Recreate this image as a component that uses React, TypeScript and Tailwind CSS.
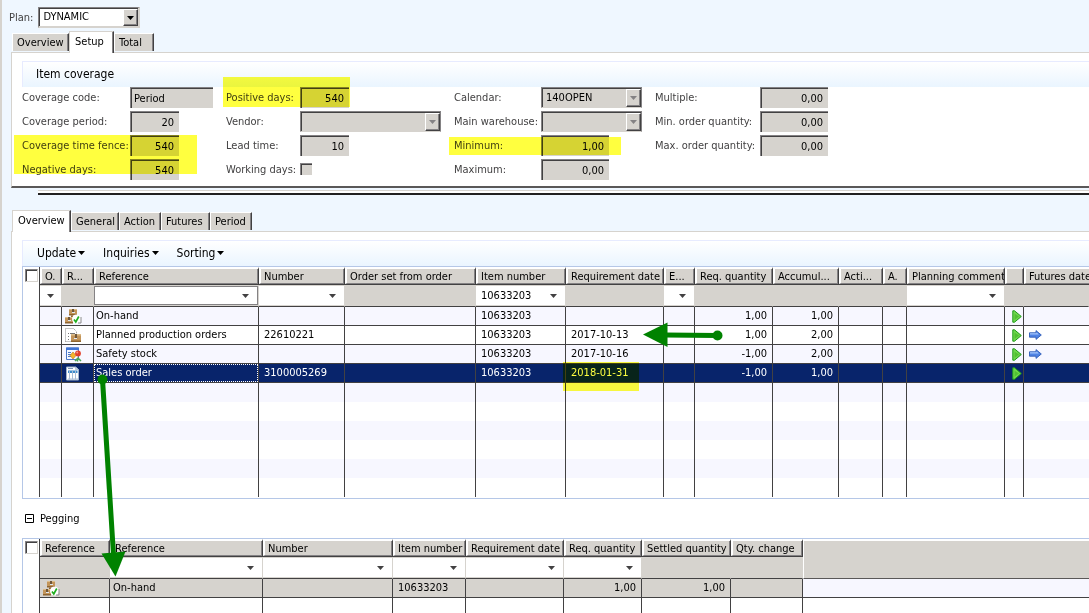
import type { ReactNode } from 'react';
import clsx from 'clsx';

type IconName = 'stock' | 'production' | 'safety' | 'sales';

function RowIcon({ name }: { name: IconName }) {
  if (name === 'stock') {
    return (
      <svg width="17" height="15" viewBox="0 0 17 15" className="block" aria-hidden="true">
        <path d="M4 0h8v6H4zM0 8h8v6H0z" fill="#c3955a" />
        <path d="M4 5h8v1.500H4zM0 13h8v1.500H0z" fill="#8f6530" />
        <path d="M4 0h8v1H4zM0 8h8v1H0z" fill="#dcbc8a" />
        <path d="M7 0h2v3H7zM3 8h2v3H3z" fill="#6f5638" />
        <path d="M7 3h3v1H7zM3 11h3v1H3z" fill="#dfe6f2" />
        <path d="M6 6.500h2V8H6zM8 7h3" fill="#8f6530" />
        <circle cx="11.500" cy="10" r="4.500" fill="#fff" />
        <path d="M16 8v6h-3" fill="none" stroke="#8c8c8c" />
        <path d="M9 10.500l1.800 2.500 3-5.500" fill="none" stroke="#1fae1f" strokeWidth="1.700" />
      </svg>
    );
  }
  if (name === 'production') {
    return (
      <svg width="17" height="15" viewBox="0 0 17 15" className="block" aria-hidden="true">
        <path d="M.5 13.500V.5H8.500l3 3V6" fill="none" stroke="#8d8d8d" strokeDasharray="1 1" />
        <path d="M.5 13.500H6" stroke="#8d8d8d" strokeDasharray="1 1" />
        <path d="M3 5.500h1M5 5.500h5M3 8.500h1M3 11.500h1" stroke="#777" />
        <path d="M6 6h10v8H6z" fill="#c3955a" />
        <path d="M6 6h10v1.500H6z" fill="#dcbc8a" />
        <path d="M6 12.500h10V14H6z" fill="#8f6530" />
        <path d="M10 6h2v4h-2z" fill="#6f5638" />
        <path d="M9 10h3v1H9z" fill="#dfe6f2" />
      </svg>
    );
  }
  if (name === 'safety') {
    return (
      <svg width="17" height="15" viewBox="0 0 17 15" className="block" aria-hidden="true">
        <path d="M1.500 1h12v11.500h-12z" fill="#f4f8ff" stroke="#4b78c8" />
        <path d="M1 .5h13V3H1z" fill="#3f74d6" />
        <path d="M3 5.500h3M3 7.500h3M3 9.500h3" stroke="#4b78c8" />
        <path d="M8 5l3 3.500L8 12 5 8.500z" fill="#f4b72c" stroke="#b9791a" strokeWidth=".6" />
        <path d="M12.500 11v3.500M10 14l3-3 3 3" stroke="#4aa556" strokeWidth="1.500" fill="none" />
        <circle cx="13" cy="6.500" r="2.900" fill="#e2402b" />
        <circle cx="12.200" cy="5.600" r="1" fill="#f79a84" />
      </svg>
    );
  }
  return (
    <svg width="17" height="15" viewBox="0 0 17 15" className="block" aria-hidden="true">
      <path d="M1.500 1h9l3 2.500V14h-12z" fill="#fff" stroke="#9fb2ca" />
      <path d="M10.500 1v2.500h3z" fill="#cfdaea" stroke="#9fb2ca" strokeWidth=".6" />
      <path d="M3 2.500h5" stroke="#7d95b5" />
      <path d="M3 4.500h9.500V7H3z" fill="#3c8ccc" />
      <path d="M4.500 4.500v9M7.500 4.500v9M10.500 4.500v9" stroke="#a9bdd6" />
      <path d="M3 13h10" stroke="#a9bdd6" />
    </svg>
  );
}

function PlayIcon() {
  return (
    <svg width="10" height="13" viewBox="0 0 10 13" className="mt-px block" aria-hidden="true">
      <path d="M.8.800h1.700l6.800 5.700-6.800 5.700H.8z" fill="#6fd84c" stroke="#1f9a1c" strokeLinejoin="round" />
      <path d="M2.500 3.500v6.500l4.500-3.400z" fill="#52bf34" />
    </svg>
  );
}

function ArrowIcon() {
  return (
    <svg width="13" height="10" viewBox="0 0 13 10" className="block" aria-hidden="true">
      <path d="M.5 2.800h6.500V.6L12.300 5 7 9.400V7.200H.5z" fill="#4f83e4" stroke="#2f5cb8" strokeWidth=".9" />
      <path d="M1 3.300h6.500V2.200l2.300 2.300H1z" fill="#a3c4fa" />
    </svg>
  );
}

function Caret({ className }: { className?: string }) {
  return (
    <svg width="7" height="4" viewBox="0 0 7 4" className={clsx('block shrink-0', className)} aria-hidden="true">
      <path d="M0 0h7L3.500 4z" fill="currentColor" />
    </svg>
  );
}

const inset = 'border-t border-l border-[#848284] shadow-[inset_1px_1px_0_#424142]';
const sunken = `${inset} bg-[#d6d3ce]`;

function TextField({ id, value, className }: { id: string; value: string; className: string }) {
  return <input id={id} readOnly value={value} className={clsx('h-[21px] pr-[5px] pl-[3px] outline-none', sunken, className)} />;
}

function DropField({ id, value, className, active }: { id: string; value: string; className: string; active?: boolean }) {
  return (
    <div
      className={clsx(
        'relative h-[21px] border',
        inset,
        active ? 'border-r-2 border-b-2 border-r-[#d6d3ce] border-b-[#d6d3ce] bg-white' : 'border-r-[#848284] border-b-[#d6d3ce] bg-[#d6d3ce]',
        className,
      )}
    >
      <select id={id} defaultValue={value} className="block h-full w-full appearance-none bg-transparent pl-1 text-black outline-none">
        <option>{value}</option>
      </select>
      <span
        className={clsx(
          'pointer-events-none absolute top-px right-0 bottom-0 flex w-[15px] items-center justify-center border-t border-r border-b border-l border-t-white border-r-[#424142] border-b-[#424142] border-l-white bg-[#d6d3ce] shadow-[inset_-1px_-1px_0_#848284]',
          active ? 'text-black' : 'text-[#848284]',
        )}
      >
        <Caret />
      </span>
    </div>
  );
}

function Field({ id, label, children }: { id: string; label: string; children: ReactNode }) {
  return (
    <>
      <label htmlFor={id} className="h-6 text-[#424142] leading-[22px]">
        {label}
      </label>
      <div className="h-6">{children}</div>
    </>
  );
}

function Tabs({ items, active, label }: { items: { name: string; width: string }[]; active: string; label: string }) {
  return (
    <div role="tablist" aria-label={label} className="ml-3 flex h-[21px] items-end">
      {items.map(({ name, width }) => (
        <button
          key={name}
          role="tab"
          aria-selected={name === active}
          className={clsx(
            'border-t border-l border-r border-r-[#424142] pl-1 text-left text-black shadow-[inset_-1px_0_0_#848284]',
            width,
            name === active
              ? 'relative -mb-px h-[22px] border-t-[#d6d3ce] border-l-[#d6d3ce] bg-white pb-px pl-[5px]'
              : 'mb-px h-[18px] border-t-white border-l-white bg-[#d6d3ce] pt-px',
          )}
        >
          {name}
        </button>
      ))}
    </div>
  );
}

function SelectAll({ label }: { label: string }) {
  return (
    <th className="border-r border-r-[#424142] p-0 align-top font-normal">
      <input type="checkbox" aria-label={label} className={clsx('mt-[2px] ml-[2px] block size-[13px] appearance-none border border-r-[#d6d3ce] border-b-[#d6d3ce] bg-white', inset)} />
    </th>
  );
}

function HeadCell({ children, last }: { children?: ReactNode; last?: boolean }) {
  return (
    <th
      className={clsx(
        'h-[18px] overflow-hidden border-t-2 border-b border-t-white border-b-[#424142] bg-[#d6d3ce] p-0 text-left font-normal whitespace-nowrap',
        !last && 'border-r border-r-[#424142]',
      )}
    >
      <div className={clsx('h-[15px] border-b border-l-2 border-b-[#848284] border-l-white pl-[3px] leading-4', !last && 'border-r border-r-[#848284]')}>
        {children}
      </div>
    </th>
  );
}

type Filter = 'none' | 'open' | 'boxed';

function FilterCell({ kind, value, label, narrow }: { kind: Filter; value?: string; label: string; narrow?: boolean }) {
  return (
    <td className="h-[22px] border-r border-b border-r-[#d6d3ce] border-b-[#424142] bg-[#d6d3ce] p-0">
      {kind !== 'none' && (
        <div className={clsx('flex h-[19px] items-center bg-white', kind === 'boxed' && 'border border-[#848284]')}>
          {!narrow && (
            <input aria-label={`Filter ${label}`} defaultValue={value} className="w-full min-w-0 flex-1 bg-transparent pl-[5px] outline-none" />
          )}
          <button aria-label={`Open ${label} filter`} className={clsx('text-[#424142]', narrow ? 'mx-auto' : 'pr-2')}>
            <Caret />
          </button>
        </div>
      )}
    </td>
  );
}

interface Column {
  name: string;
  width?: string;
  filter: Filter;
  filterValue?: string;
  narrow?: boolean;
}

const demandColumns: Column[] = [
  { name: 'O.', width: 'w-[22px]', filter: 'open', narrow: true },
  { name: 'R...', width: 'w-8', filter: 'none' },
  { name: 'Reference', width: 'w-[165px]', filter: 'boxed' },
  { name: 'Number', width: 'w-[86px]', filter: 'open' },
  { name: 'Order set from order', width: 'w-[131px]', filter: 'none' },
  { name: 'Item number', width: 'w-[90px]', filter: 'open', filterValue: '10633203' },
  { name: 'Requirement date', width: 'w-[98px]', filter: 'none' },
  { name: 'E...', width: 'w-[31px]', filter: 'open' },
  { name: 'Req. quantity', width: 'w-[78px]', filter: 'none' },
  { name: 'Accumul...', width: 'w-[66px]', filter: 'none' },
  { name: 'Acti...', width: 'w-11', filter: 'none' },
  { name: 'A.', width: 'w-6', filter: 'none' },
  { name: 'Planning comment', width: 'w-[98px]', filter: 'open' },
  { name: '', width: 'w-[19px]', filter: 'none' },
  { name: 'Futures date', filter: 'none' },
];

interface Demand {
  icon: IconName;
  reference: string;
  number?: string;
  date?: string;
  quantity: string;
  accumulated: string;
  future?: boolean;
  selected?: boolean;
}

const demands: Demand[] = [
  { icon: 'stock', reference: 'On-hand', quantity: '1,00', accumulated: '1,00' },
  { icon: 'production', reference: 'Planned production orders', number: '22610221', date: '2017-10-13', quantity: '1,00', accumulated: '2,00', future: true },
  { icon: 'safety', reference: 'Safety stock', date: '2017-10-16', quantity: '-1,00', accumulated: '2,00', future: true },
  { icon: 'sales', reference: 'Sales order', number: '3100005269', date: '2018-01-31', quantity: '-1,00', accumulated: '1,00', selected: true },
];

function Cell({ children, className, blank, last }: { children?: ReactNode; className?: string; blank?: boolean; last?: boolean }) {
  return (
    <td
      className={clsx(
        'h-[19px] overflow-hidden border-[#424142] py-0 leading-[18px] whitespace-nowrap',
        !blank && 'border-b',
        !last && 'border-r',
        className ?? 'px-[5px]',
      )}
    >
      {children}
    </td>
  );
}

function DemandTable() {
  return (
    <table className="w-full table-fixed border-separate border-spacing-0">
      <colgroup>
        <col className="w-[17px]" />
        {demandColumns.map((c) => (
          <col key={c.name} className={c.width} />
        ))}
      </colgroup>
      <thead>
        <tr>
          <SelectAll label="Select all requirements" />
          {demandColumns.map((c, i) => (
            <HeadCell key={c.name} last={i === demandColumns.length - 1}>
              {c.name}
            </HeadCell>
          ))}
        </tr>
      </thead>
      <tbody>
        <tr>
          <td className="border-r border-[#424142] p-0" />
          {demandColumns.map((c) => (
            <FilterCell key={c.name} kind={c.filter} value={c.filterValue} label={c.name} narrow={c.narrow} />
          ))}
        </tr>
        {demands.map((d, i) => (
          <tr key={d.reference} className={d.selected ? 'bg-[#08246b] text-white' : i % 2 ? 'bg-white' : 'bg-[#f7f7ff]'}>
            <td className="border-r border-[#424142] bg-white p-0" />
            <Cell />
            <Cell className="pl-[3px]">
              <RowIcon name={d.icon} />
            </Cell>
            <Cell className="p-0">
              <div className={clsx('h-[18px] border pl-px leading-4', d.selected ? 'border-dotted border-white' : 'border-transparent')}>{d.reference}</div>
            </Cell>
            <Cell>{d.number}</Cell>
            <Cell />
            <Cell>10633203</Cell>
            <Cell>{d.date}</Cell>
            <Cell />
            <Cell className="px-[5px] text-right">{d.quantity}</Cell>
            <Cell className="px-[5px] text-right">{d.accumulated}</Cell>
            <Cell />
            <Cell />
            <Cell />
            <Cell className="pl-[7px]">
              <PlayIcon />
            </Cell>
            <Cell last>{d.future && <ArrowIcon />}</Cell>
          </tr>
        ))}
        {[0, 1, 2, 3, 4, 5].map((n) => (
          <tr key={n} className={n % 2 ? 'bg-white' : 'bg-[#f7f7ff]'}>
            <td className="border-r border-[#424142] bg-white p-0" />
            {demandColumns.map((c, i) => (
              <Cell key={c.name} blank last={i === demandColumns.length - 1} />
            ))}
          </tr>
        ))}
      </tbody>
    </table>
  );
}

const peggingColumns: Column[] = [
  { name: 'Reference', width: 'w-[70px]', filter: 'none' },
  { name: 'Reference', width: 'w-[153px]', filter: 'open' },
  { name: 'Number', width: 'w-[130px]', filter: 'open' },
  { name: 'Item number', width: 'w-[73px]', filter: 'open' },
  { name: 'Requirement date', width: 'w-[98px]', filter: 'open' },
  { name: 'Req. quantity', width: 'w-[78px]', filter: 'open' },
  { name: 'Settled quantity', width: 'w-[89px]', filter: 'none' },
  { name: 'Qty. change', width: 'w-[72px]', filter: 'none' },
];

function PeggingTable() {
  return (
    <table className="w-full table-fixed border-separate border-spacing-0">
      <colgroup>
        <col className="w-[17px]" />
        {peggingColumns.map((c, i) => (
          <col key={i} className={c.width} />
        ))}
        <col />
      </colgroup>
      <thead>
        <tr>
          <SelectAll label="Select all pegging lines" />
          {peggingColumns.map((c, i) => (
            <HeadCell key={i}>{c.name}</HeadCell>
          ))}
          <th rowSpan={2} className="border-t-2 border-b border-l border-t-white border-b-[#5a5858] border-l-white bg-[#d6d3ce] p-0" />
        </tr>
        <tr>
          <td className="border-r border-[#424142] p-0" />
          {peggingColumns.map((c, i) => (
            <FilterCell key={i} kind={c.filter} label={c.name} />
          ))}
        </tr>
      </thead>
      <tbody>
        <tr className="bg-[#d6d3ce]">
          <td className="border-r border-[#424142] bg-white p-0" />
          <Cell className="pl-[3px]">
            <RowIcon name="stock" />
          </Cell>
          <Cell className="pl-[3px]">On-hand</Cell>
          <Cell />
          <Cell>10633203</Cell>
          <Cell />
          <Cell className="px-[5px] text-right">1,00</Cell>
          <Cell className="px-[5px] text-right">1,00</Cell>
          <Cell />
          <td className="border-b border-[#424142] bg-[#f7f7ff]" />
        </tr>
        <tr>
          <td className="border-r border-[#424142]" />
          {peggingColumns.map((_, i) => (
            <Cell key={i} blank />
          ))}
          <td />
        </tr>
      </tbody>
    </table>
  );
}

const highlight = 'pointer-events-none absolute bg-[#ffff3f] mix-blend-multiply';
const ribbon = 'border-t border-[#e7ebff] bg-linear-to-b from-white to-[#eaf5ff]';

export default function App() {
  return (
    <div className="relative h-screen overflow-hidden border-l-2 border-[#d6d3ce] bg-[#eff7ff] font-['DejaVu_Sans_Condensed','DejaVu_Sans',sans-serif] text-[11px] leading-4 text-black">
      <div className="flex items-center gap-[5px] pt-[7px] pl-[7px]">
        <label htmlFor="plan" className="text-[#424142]">
          Plan:
        </label>
        <DropField id="plan" value="DYNAMIC" className="w-[102px]" active />
      </div>

      <div className="-ml-[2px] pt-[3px]">
        <Tabs
          label="Plan sections"
          active="Setup"
          items={[
            { name: 'Overview', width: 'w-[57px]' },
            { name: 'Setup', width: 'w-[45px]' },
            { name: 'Total', width: 'w-10' },
          ]}
        />
      </div>
      <section className="ml-[9px] border-t border-b-2 border-l border-t-[#d6d3ce] border-b-[#5a5858] border-l-[#d6d3ce] bg-white pt-2 pb-[3px] pl-[10px]">
        <h2 className={clsx('h-[26px] border-l pl-[13px] text-[12px] leading-6', ribbon)}>Item coverage</h2>
        <div className="flex">
          <div className="grid grid-cols-[108px_96px] content-start whitespace-nowrap">
            <Field id="code" label="Coverage code:">
              <TextField id="code" value="Period" className="w-[83px]" />
            </Field>
            <Field id="period" label="Coverage period:">
              <TextField id="period" value="20" className="w-[49px] text-right" />
            </Field>
            <Field id="fence" label="Coverage time fence:">
              <TextField id="fence" value="540" className="w-[49px] text-right" />
            </Field>
            <Field id="negative" label="Negative days:">
              <TextField id="negative" value="540" className="w-[49px] text-right" />
            </Field>
          </div>
          <div className="grid grid-cols-[74px_154px] content-start whitespace-nowrap">
            <Field id="positive" label="Positive days:">
              <TextField id="positive" value="540" className="w-[49px] text-right" />
            </Field>
            <Field id="vendor" label="Vendor:">
              <DropField id="vendor" value="" className="w-[141px]" />
            </Field>
            <Field id="lead" label="Lead time:">
              <TextField id="lead" value="10" className="w-[49px] text-right" />
            </Field>
            <Field id="working" label="Working days:">
              <input id="working" type="checkbox" className={clsx('mt-1 block size-3 appearance-none', sunken)} />
            </Field>
          </div>
          <div className="grid grid-cols-[87px_114px] content-start whitespace-nowrap">
            <Field id="calendar" label="Calendar:">
              <DropField id="calendar" value="140OPEN" className="w-[101px]" />
            </Field>
            <Field id="warehouse" label="Main warehouse:">
              <DropField id="warehouse" value="" className="w-[101px]" />
            </Field>
            <Field id="minimum" label="Minimum:">
              <TextField id="minimum" value="1,00" className="w-[68px] text-right" />
            </Field>
            <Field id="maximum" label="Maximum:">
              <TextField id="maximum" value="0,00" className="w-[68px] text-right" />
            </Field>
          </div>
          <div className="grid grid-cols-[105px_68px] content-start whitespace-nowrap">
            <Field id="multiple" label="Multiple:">
              <TextField id="multiple" value="0,00" className="w-[68px] text-right" />
            </Field>
            <Field id="min-order" label="Min. order quantity:">
              <TextField id="min-order" value="0,00" className="w-[68px] text-right" />
            </Field>
            <Field id="max-order" label="Max. order quantity:">
              <TextField id="max-order" value="0,00" className="w-[68px] text-right" />
            </Field>
          </div>
        </div>
      </section>
      <div role="separator" className="mt-[2px] ml-9 h-[5px] border-t border-b-2 border-t-[#d6d3ce] border-b-[#212021] bg-white" />

      <div className="-ml-[2px] pt-[15px]">
        <Tabs
          label="Requirement views"
          active="Overview"
          items={[
            { name: 'Overview', width: 'w-[59px]' },
            { name: 'General', width: 'w-12' },
            { name: 'Action', width: 'w-[42px]' },
            { name: 'Futures', width: 'w-[49px]' },
            { name: 'Period', width: 'w-[42px]' },
          ]}
        />
      </div>
      <main className="ml-[9px] border-t border-l border-[#d6d3ce] bg-white pt-2 pl-[10px]">
        <div role="toolbar" className={clsx('flex h-[26px] items-center gap-[18px] border-l pb-px pl-[14px]', ribbon)}>
          {['Update', 'Inquiries', 'Sorting'].map((name) => (
            <button key={name} className="flex items-center gap-[2px] text-[12px]">
              {name}
              <Caret />
            </button>
          ))}
        </div>
        <div className="border-t border-b border-l border-[#b5c7e7] pb-px">
          <DemandTable />
        </div>
        <button aria-expanded="true" className="flex h-[39px] items-center gap-[6px] pl-[3px]">
          <svg width="9" height="9" viewBox="0 0 9 9" aria-hidden="true">
            <path d="M.5.5h8v8h-8zM2 4.500h5" fill="none" stroke="#000" />
          </svg>
          Pegging
        </button>
        <div className="border-t border-l border-[#b5c7e7]">
          <PeggingTable />
        </div>
      </main>

      <div className={clsx(highlight, 'top-[135px] left-3 h-[39px] w-[183px]')} />
      <div className={clsx(highlight, 'top-[77px] left-[221px] h-[30px] w-[127px]')} />
      <div className={clsx(highlight, 'top-[137px] left-[447px] h-[18px] w-[172px]')} />
      <div className={clsx(highlight, 'top-[362px] left-[561px] h-[29px] w-[76px]')} />
      <svg className="pointer-events-none absolute top-0 -left-[2px]" width="740" height="613" viewBox="0 0 740 613" fill="#008200" aria-hidden="true">
        <circle cx="717.500" cy="335.500" r="5" />
        <path d="M717.500 335.500L665 335" stroke="#008200" strokeWidth="5" />
        <path d="M643 334.500L667.500 322.500V347z" />
        <circle cx="102.500" cy="379.500" r="5" />
        <path d="M102.500 379.500L113.500 555" stroke="#008200" strokeWidth="5" />
        <path d="M115.500 576.500L101.500 553.500L125.500 551.500z" />
      </svg>
    </div>
  );
}
